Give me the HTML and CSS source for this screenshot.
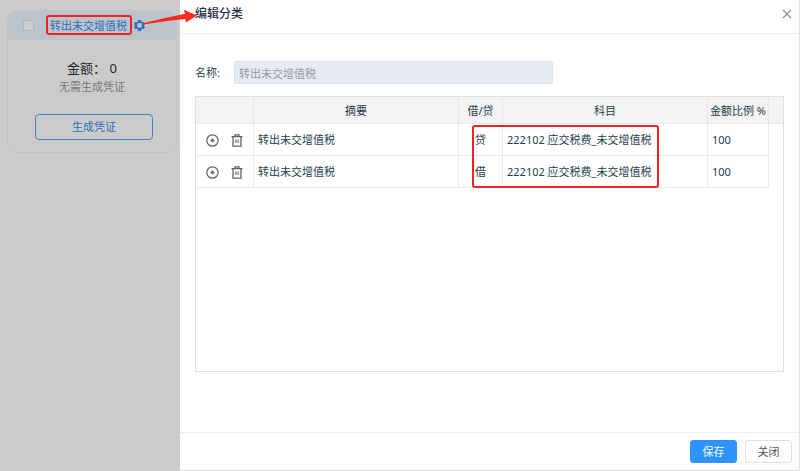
FILE: index.html
```html
<!DOCTYPE html>
<html lang="zh-CN">
<head>
    <meta charset="UTF-8">
    <title>编辑分类</title>
    <link rel="stylesheet" href="styles.css">
</head>
<body>
    <div class="sidebar">
        <div class="card">
            <div class="card-header">
                <input type="checkbox" class="card-check" aria-label="选择">
                <a href="#" class="card-title">转出未交增值税</a>
                <button class="icon-btn gear" aria-label="设置">
                    <svg width="11" height="11" viewBox="0 0 24 24">
                        <path fill="#3272bd" fill-rule="evenodd" d="M9 0h6l1 3.500 2 1.200 3.500-.9 2.500 5-2.500 3.200 2.500 3.200-2.500 5-3.500-.9-2 1.200L15 24H9l-1-3.500-2-1.200-3.500.9-2.500-5L2.500 12 0 8.800l2.500-5 3.500.9 2-1.200zM12 6.600a5.400 5.400 0 1 0 0 10.800 5.400 5.400 0 0 0 0-10.800z"/>
                    </svg>
                </button>
            </div>
            <div class="card-body">
                <div class="amount">金额：&nbsp;0</div>
                <div class="hint">无需生成凭证</div>
                <button class="generate-btn">生成凭证</button>
            </div>
        </div>
    </div>

    <div class="drawer">
        <div class="drawer-header">
            <h2>编辑分类</h2>
            <button class="icon-btn" aria-label="关闭窗口">
                <svg width="10" height="10" viewBox="0 0 10 10">
                    <path d="M1 1l8 8M9 1l-8 8" stroke="#8c8c8c" stroke-width="1.200"/>
                </svg>
            </button>
        </div>

        <div class="drawer-body">
            <div class="form-row">
                <label for="name">名称:</label>
                <input type="text" id="name" value="转出未交增值税" disabled>
            </div>

            <div class="table-box">
                <table>
                    <colgroup>
                        <col class="col-action">
                        <col class="col-summary">
                        <col class="col-side">
                        <col class="col-subject">
                        <col class="col-rate">
                        <col class="col-scroll">
                    </colgroup>
                    <thead>
                        <tr>
                            <th></th>
                            <th>摘要</th>
                            <th>借/贷</th>
                            <th>科目</th>
                            <th>金额比例 %</th>
                            <th></th>
                        </tr>
                    </thead>
                    <tbody>
                        <tr>
                            <td>
                                <div class="actions">
                                    <button class="icon-btn" aria-label="添加">
                                        <svg width="13" height="13" viewBox="0 0 13 13" fill="none" stroke="#626262">
                                            <circle cx="6.500" cy="6.500" r="5.700" stroke-width="1.200"/>
                                            <path d="M6.500 4.500v4M4.500 6.500h4" stroke-width="1.500"/>
                                        </svg>
                                    </button>
                                    <button class="icon-btn" aria-label="删除">
                                        <svg width="12" height="13" viewBox="0 0 12 13" fill="none" stroke="#626262" stroke-width="1.300">
                                            <path d="M.5 2.600h11M4 2.500V.8h4v1.700M2 2.600v9.600h8V2.600"/>
                                            <path d="M4.900 5.500v3.500M7.100 5.500v3.500" stroke-width="1.100"/>
                                        </svg>
                                    </button>
                                </div>
                            </td>
                            <td>转出未交增值税</td>
                            <td class="center">贷</td>
                            <td>222102 应交税费_未交增值税</td>
                            <td>100</td>
                            <td class="blank"></td>
                        </tr>
                        <tr>
                            <td>
                                <div class="actions">
                                    <button class="icon-btn" aria-label="添加">
                                        <svg width="13" height="13" viewBox="0 0 13 13" fill="none" stroke="#626262">
                                            <circle cx="6.500" cy="6.500" r="5.700" stroke-width="1.200"/>
                                            <path d="M6.500 4.500v4M4.500 6.500h4" stroke-width="1.500"/>
                                        </svg>
                                    </button>
                                    <button class="icon-btn" aria-label="删除">
                                        <svg width="12" height="13" viewBox="0 0 12 13" fill="none" stroke="#626262" stroke-width="1.300">
                                            <path d="M.5 2.600h11M4 2.500V.8h4v1.700M2 2.600v9.600h8V2.600"/>
                                            <path d="M4.900 5.500v3.500M7.100 5.500v3.500" stroke-width="1.100"/>
                                        </svg>
                                    </button>
                                </div>
                            </td>
                            <td>转出未交增值税</td>
                            <td class="center">借</td>
                            <td>222102 应交税费_未交增值税</td>
                            <td>100</td>
                            <td class="blank"></td>
                        </tr>
                    </tbody>
                </table>
                <div class="mark mark-rows"></div>
            </div>
        </div>

        <div class="drawer-footer">
            <button class="btn btn-primary">保存</button>
            <button class="btn">关闭</button>
        </div>
    </div>

    <!-- red guide marks over the page -->
    <div class="mark mark-title"></div>
    <svg class="arrow" width="56" height="20" viewBox="0 0 56 20">
        <path fill="#fb2a1c" d="M0 15.200L24 9.500 42 5.800 41 1.800 54 7.500 43 14.500l-.7-3.500L24 13 0 16.400z"/>
    </svg>
</body>
</html>
```

FILE: styles.css
```css
* {
    box-sizing: border-box;
}

body {
    margin: 0;
    min-height: 100vh;
    display: flex;
    position: relative;
    background-color: #cbcbcb;
    color: #263c4c;
    font-family: "Noto Sans", "Noto Sans CJK SC", sans-serif;
    font-size: 11px;
    line-height: 16px;
}

button,
input {
    font-family: inherit;
    font-size: 11px;
    line-height: 16px;
}

button {
    cursor: pointer;
}

.icon-btn {
    display: flex;
    padding: 0;
    border: none;
    background: none;
}

/* left list */
.sidebar {
    flex: 0 0 180px;
    padding: 10px 3px 10px 7px;
}

.card {
    border: 1px solid #c0c2c4;
    border-radius: 10px;
    overflow: hidden;
}

.card-header {
    display: flex;
    align-items: center;
    height: 29px;
    padding-left: 15px;
    background-color: #bbc4cc;
}

.card-check {
    appearance: none;
    width: 11px;
    height: 11px;
    margin: 0 16px 0 0;
    border: 1px solid #b4b4b4;
    border-radius: 2px;
    background-color: #cecece;
}

.card-title {
    color: #2f6db4;
    text-decoration: none;
}

.gear {
    margin-left: 7px;
}

.card-body {
    display: flex;
    flex-direction: column;
    align-items: center;
    padding: 18px 24px 12px;
}

.amount {
    color: #262626;
    font-size: 13px;
    line-height: 20px;
}

.hint {
    margin-bottom: 18px;
    color: #777;
    line-height: 18px;
}

.generate-btn {
    align-self: stretch;
    height: 26px;
    padding: 0;
    border: 1px solid #4a80bd;
    border-radius: 4px;
    background: none;
    color: #2f6db4;
    margin: 0 -1px 0 3px;
}

/* drawer */
.drawer {
    flex: 1;
    min-width: 0;
    display: flex;
    flex-direction: column;
    border-right: 1px solid #e2e3e8;
    border-bottom: 1px solid #dcdde2;
    background-color: #fff;
}

.drawer-header {
    display: flex;
    align-items: center;
    justify-content: space-between;
    height: 34px;
    padding: 0 7px 5px 15px;
    border-bottom: 1px solid #ededed;
}

.drawer-header h2 {
    margin: 0;
    color: #26304a;
    font-size: 12px;
    font-weight: 500;
}

.drawer-body {
    flex: 1;
    display: flex;
    flex-direction: column;
    padding: 27px 15px 60px;
}

.form-row {
    display: flex;
    align-items: center;
    gap: 15px;
    margin-bottom: 12px;
}

.form-row label {
    width: 24px;
    white-space: nowrap;
}

.form-row input {
    width: 319px;
    height: 23px;
    padding: 0 4px;
    border: 1px solid #dfe2ee;
    border-radius: 2px;
    background-color: #e6eaf5;
    color: #999;
}

.table-box {
    flex: 1;
    position: relative;
    border: 1px solid #dcdfe8;
}

table {
    width: 100%;
    table-layout: fixed;
    border-collapse: separate;
    border-spacing: 0;
}

.col-action {
    width: 58px;
}

.col-side {
    width: 44px;
}

.col-subject {
    width: 205px;
}

.col-rate {
    width: 61px;
}

.col-scroll {
    width: 14px;
}

th {
    height: 27px;
    padding: 2px 0 0;
    border-right: 1px solid #e6e7ea;
    border-bottom: 1px solid #eaebee;
    background-color: #f3f3f4;
    font-weight: 400;
    white-space: nowrap;
}

th:last-child {
    border-right: none;
}

td {
    height: 32px;
    padding: 1px 4px 0;
    border-right: 1px solid #ebebee;
    border-bottom: 1px solid #ebebee;
    white-space: nowrap;
}

td.center {
    text-align: center;
}

td.blank {
    border: none;
}

.actions {
    display: flex;
    align-items: center;
    gap: 12px;
    padding-left: 6px;
}

.drawer-footer {
    display: flex;
    justify-content: flex-end;
    gap: 8px;
    padding: 7px 7px 7px 15px;
    border-top: 1px solid #ededed;
}

.btn {
    width: 47px;
    height: 23px;
    padding: 0;
    border: 1px solid #dcdfe6;
    border-radius: 3px;
    background-color: #fff;
    color: #555;
}

.btn-primary {
    border-color: #2f93ff;
    background-color: #2f93ff;
    color: #fff;
}

/* guide marks */
.mark {
    position: absolute;
    border: 2px solid #ee2420;
    border-radius: 3px;
    pointer-events: none;
}

.mark-title {
    left: 46px;
    top: 15px;
    width: 86px;
    height: 20px;
}

.mark-rows {
    right: 124px;
    top: 28px;
    width: 187px;
    height: 63px;
}

.arrow {
    position: absolute;
    left: 143px;
    top: 8px;
    pointer-events: none;
}
```
